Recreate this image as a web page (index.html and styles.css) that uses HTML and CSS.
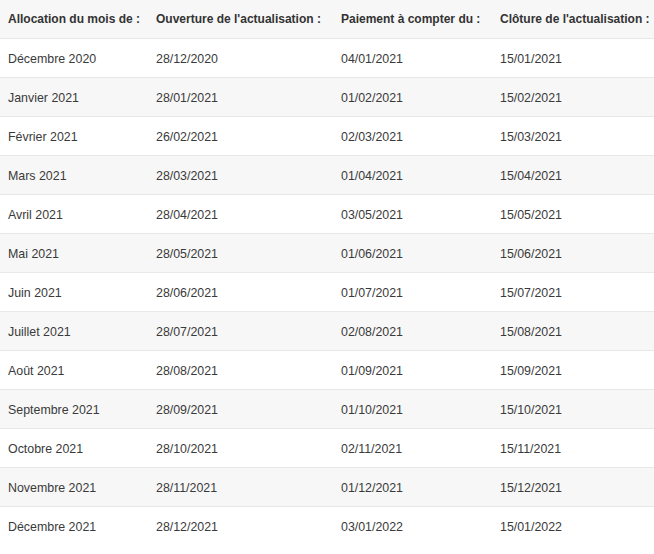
FILE: index.html
```html
<!DOCTYPE html>
<html lang="fr">
<head>
<meta charset="utf-8">
<link rel="stylesheet" href="styles.css">
</head>
<body>
<table class="cal">
<colgroup><col class="c1"><col class="c2"><col class="c3"><col class="c4"></colgroup>
<thead>
<tr><th>Allocation du mois de :</th><th>Ouverture de l'actualisation :</th><th>Paiement à compter du :</th><th>Clôture de l'actualisation :</th></tr>
</thead>
<tbody>
<tr><td>Décembre 2020</td><td>28/12/2020</td><td>04/01/2021</td><td>15/01/2021</td></tr>
<tr><td>Janvier 2021</td><td>28/01/2021</td><td>01/02/2021</td><td>15/02/2021</td></tr>
<tr><td>Février 2021</td><td>26/02/2021</td><td>02/03/2021</td><td>15/03/2021</td></tr>
<tr><td>Mars 2021</td><td>28/03/2021</td><td>01/04/2021</td><td>15/04/2021</td></tr>
<tr><td>Avril 2021</td><td>28/04/2021</td><td>03/05/2021</td><td>15/05/2021</td></tr>
<tr><td>Mai 2021</td><td>28/05/2021</td><td>01/06/2021</td><td>15/06/2021</td></tr>
<tr><td>Juin 2021</td><td>28/06/2021</td><td>01/07/2021</td><td>15/07/2021</td></tr>
<tr><td>Juillet 2021</td><td>28/07/2021</td><td>02/08/2021</td><td>15/08/2021</td></tr>
<tr><td>Août 2021</td><td>28/08/2021</td><td>01/09/2021</td><td>15/09/2021</td></tr>
<tr><td>Septembre 2021</td><td>28/09/2021</td><td>01/10/2021</td><td>15/10/2021</td></tr>
<tr><td>Octobre 2021</td><td>28/10/2021</td><td>02/11/2021</td><td>15/11/2021</td></tr>
<tr><td>Novembre 2021</td><td>28/11/2021</td><td>01/12/2021</td><td>15/12/2021</td></tr>
<tr><td>Décembre 2021</td><td>28/12/2021</td><td>03/01/2022</td><td>15/01/2022</td></tr>
</tbody>
</table>
</body>
</html>
```
FILE: styles.css
```css
html, body {
  margin: 0;
  padding: 0;
  background: #fff;
}
.cal {
  width: 654px;
  table-layout: fixed;
  border-collapse: collapse;
  font-family: "Liberation Sans", Arial, sans-serif;
  font-size: 12px;
  color: #333;
}
.c1 { width: 148px; }
.c2 { width: 185px; }
.c3 { width: 159px; }
.c4 { width: 162px; }
.cal th {
  text-align: left;
  font-weight: bold;
  background: #f7f7f7;
  height: 38px;
  padding: 0 0 0 8px;
  border-bottom: 1px solid #e8e8e8;
  white-space: nowrap;
  vertical-align: middle;
}
.cal td {
  height: 36px;
  padding: 2px 0 0 8px;
  font-size: 12.4px;
  color: #3a3a3a;
  border-bottom: 1px solid #e8e8e8;
  vertical-align: middle;
  white-space: nowrap;
}
.cal tbody tr:nth-child(even) td {
  background: #f7f7f7;
}
.cal tbody tr:last-child td {
  border-bottom: none;
}
```
